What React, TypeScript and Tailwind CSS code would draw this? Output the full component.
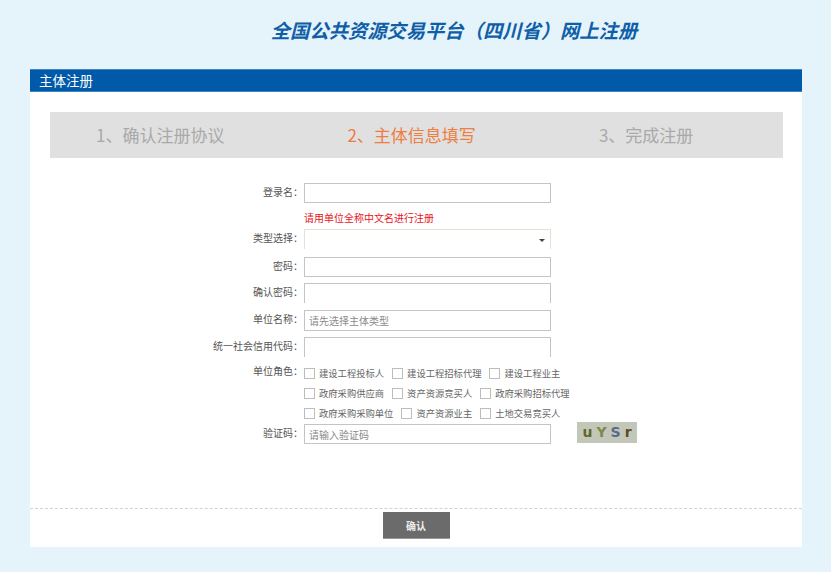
import * as React from 'react';

const cjk = "font-['Noto_Sans_CJK_SC','Liberation_Sans',sans-serif]";

const Field: React.FC<{ label: string; className?: string; children: React.ReactNode }> = ({ label, className, children }) => (
  <div className={`flex items-center ${className ?? ''}`}>
    <div className="-mt-[3px] w-[274px] shrink-0 pr-[1px] text-right text-[10px] leading-[20px] text-[#555]">{label}：</div>
    {children}
  </div>
);

const TextBox: React.FC<{ placeholder?: string; open?: boolean; tall?: boolean }> = ({ placeholder, open, tall }) => (
  <input
    placeholder={placeholder}
    className={`w-[247px] ${tall ? 'h-[21px]' : 'h-[20px]'} border border-[#c4c4c4] ${open ? 'border-b-0' : ''} bg-white px-[4px] text-[10px] outline-none placeholder:text-[#8a8a8a]`}
  />
);

const Check: React.FC<{ label: string }> = ({ label }) => (
  <label className="flex items-center gap-[4px]">
    <span className="h-[11px] w-[11px] border border-[#bdbdbd] bg-white" />
    <span className="text-[9.3px] leading-[11px] text-[#666]">{label}</span>
  </label>
);

const roles = [
  ['建设工程投标人', '建设工程招标代理', '建设工程业主'],
  ['政府采购供应商', '资产资源竞买人', '政府采购招标代理'],
  ['政府采购采购单位', '资产资源业主', '土地交易竞买人'],
];

export default function App() {
  return (
    <div className={`min-h-screen bg-[#e5f3fb] ${cjk}`}>
      <div className="flex h-[69px] items-center justify-center pb-[8px] pl-[77px]">
        <h1 className="text-[19.3px] font-bold italic text-[#0f5fa8]">全国公共资源交易平台（四川省）网上注册</h1>
      </div>

      <div className="ml-[30px] mr-[29px] h-[478px] bg-white">
        <div className="h-[23px] border-y border-[#3d86bd] bg-[#005aa9] pl-[9px] text-[13.5px] leading-[21px] text-white">主体注册</div>

        <div className="px-[20px] pt-[20px]">
          <div className="flex h-[46px] w-[733px] items-center gap-[123px] bg-[#e0e0e0] pl-[46px] text-[17px] text-[#a9a9a9]">
            <span>1、确认注册协议</span>
            <span className="text-[#ee7d3f]">2、主体信息填写</span>
            <span>3、完成注册</span>
          </div>
        </div>

        <div className="h-[350px] pt-[25px]">
          <Field label="登录名"><TextBox /></Field>
          <div className="mb-[4px] mt-[8px] pl-[274px] text-[10px] leading-[14px] text-[#e8141c]">请用单位全称中文名进行注册</div>
          <Field label="类型选择">
            <div className="relative h-[20px] w-[247px] border border-b-0 border-[#e4e2d2]">
              <span className="absolute right-[5px] top-[9px] h-0 w-0 border-x-[3px] border-t-[3px] border-x-transparent border-t-[#444]" />
            </div>
          </Field>
          <Field label="密码" className="mt-[8px]"><TextBox /></Field>
          <Field label="确认密码" className="mt-[6px]"><TextBox open /></Field>
          <Field label="单位名称" className="mt-[7px]"><TextBox tall placeholder="请先选择主体类型" /></Field>
          <Field label="统一社会信用代码" className="mt-[6px]"><TextBox open /></Field>

          <div className="mt-[5px] flex">
            <div className="-mt-[1px] w-[274px] shrink-0 pr-[1px] text-right text-[10px] leading-[20px] text-[#555]">单位角色：</div>
            <div className="flex flex-col gap-[9px] pt-[6px]">
              {roles.map((row) => (
                <div key={row[0]} className="flex gap-[8px]">
                  {row.map((r) => <Check key={r} label={r} />)}
                </div>
              ))}
            </div>
          </div>

          <Field label="验证码" className="mt-[3px]">
            <TextBox placeholder="请输入验证码" />
            <div className="mb-[3px] ml-[26px] flex h-[21px] w-[60px] items-center justify-center gap-[4px] bg-[#c3c7b9] font-['DejaVu_Sans',sans-serif] text-[14px] font-bold text-[#5f6a2a]">
              <span>u</span><span className="text-[#7d8a4a]">Y</span><span className="text-[#5a6a8a]">S</span><span className="text-[#5a4a2a]">r</span>
            </div>
          </Field>
        </div>

        <div className="flex justify-center border-t border-dashed border-[#d2d2d2] pt-[3px]">
          <button className="h-[27px] w-[67px] border-b border-[#999] bg-[#6b6b6b] text-[10px] font-bold text-[#eee]">确认</button>
        </div>
      </div>
    </div>
  );
}
